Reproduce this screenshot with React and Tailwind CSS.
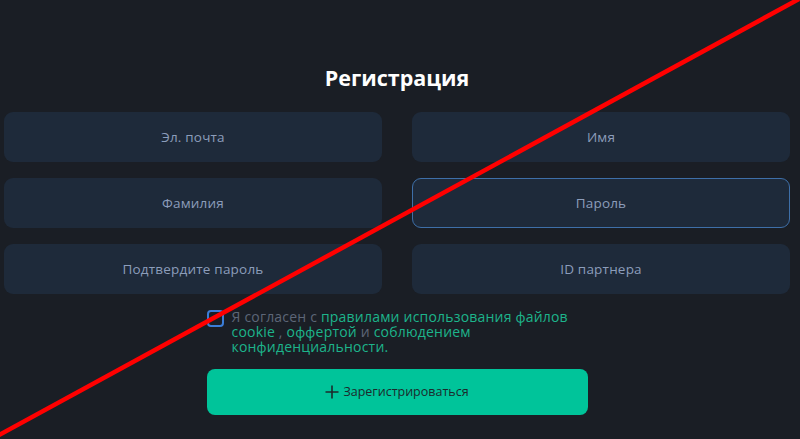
import React from "react";

const fields = [
  { label: "Эл. почта" },
  { label: "Имя" },
  { label: "Фамилия" },
  { label: "Пароль", active: true },
  { label: "Подтвердите пароль" },
  { label: "ID партнера" },
];

const App = () => {
  return (
    <div
      className="relative w-[800px] h-[439px] overflow-hidden bg-[#1a1e25]"
      style={{ fontFamily: '"Open Sans", "DejaVu Sans", sans-serif' }}
    >
      {/* Form */}
      <div className="ml-[4px] w-[786px] pt-[63px]">
        <h1 className="text-center text-[21.5px] leading-[30px] font-bold text-white">
          Регистрация
        </h1>

        <div className="grid grid-cols-2 gap-x-[30px] gap-y-[16px] mt-[19px]">
          {fields.map((f) => (
            <div
              key={f.label}
              className={`h-[50px] rounded-[9px] bg-[#1e2a3a] flex items-center justify-center text-[13.5px] tracking-[0.2px] text-[#8c9dba] ${
                f.active ? "border border-[#3e6fa8]" : ""
              }`}
            >
              {f.label}
            </div>
          ))}
        </div>

        <div className="w-[381px] mx-auto mt-[15px]">
          <div className="flex items-start gap-[8px]">
            <div className="mt-[1px] w-[17px] h-[17px] shrink-0 rounded-[4px] border-2 border-[#3b7dd8]"></div>
            <p className="text-[14px] leading-[15px] tracking-[0.2px] text-[#5d6677] whitespace-nowrap">
              Я согласен с{" "}
              <span className="text-[#1db48b]">правилами использования файлов</span>
              <br />
              <span className="text-[#1db48b]">cookie</span> ,{" "}
              <span className="text-[#1db48b]">оффертой</span> и{" "}
              <span className="text-[#1db48b]">соблюдением</span>
              <br />
              <span className="text-[#1db48b]">конфиденциальности.</span>
            </p>
          </div>

          <button className="mt-[15px] w-full h-[46px] rounded-[8px] bg-[#00c49a] flex items-center justify-center gap-[4px] text-[12.5px] text-[#1c2a2c]">
            <svg width="14" height="14" viewBox="0 0 14 14" fill="none" stroke="#1c2a2c" strokeWidth="1.6">
              <path d="M7 0.5v13M0.5 7h13" />
            </svg>
            Зарегистрироваться
          </button>
        </div>
      </div>

      {/* Red strike-through line over the screenshot */}
      <svg className="absolute inset-0 pointer-events-none" width="800" height="439" viewBox="0 0 800 439">
        <line x1="799" y1="-1" x2="-1" y2="435" stroke="#ff0000" strokeWidth="4.5" />
      </svg>
    </div>
  );
};

export default App;
